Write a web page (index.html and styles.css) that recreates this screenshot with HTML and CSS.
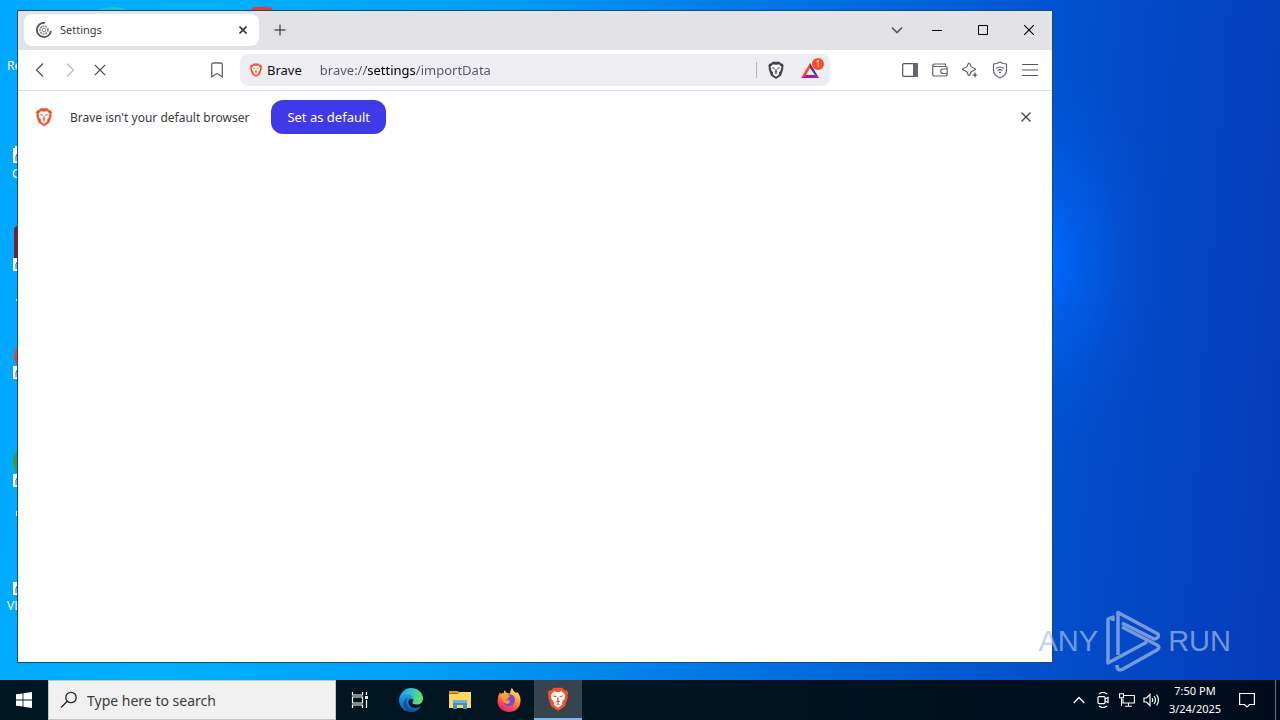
FILE: index.html
```html
<!DOCTYPE html>
<html lang="en">

<head>
  <meta charset="UTF-8">
  <meta name="viewport" content="width=device-width, initial-scale=1.0">
  <title>Settings</title>
  <link rel="stylesheet" href="styles.css">
</head>

<body>
  <!-- shared shapes -->
  <svg class="defs" aria-hidden="true">
    <symbol id="lion" viewBox="0 0 24 28">
      <path class="shield" d="M7 1h10l3 3 2-.3L24 7l-1 3 .5 2-3.500 10.500L12 28 4 22.500.500 12 1 10 0 7l2-3.300L4 4z" />
      <path class="face" d="M7.500 5l3 .7h3l3-.7 4 4.500-1 2.500 .5 1.500-3.500 4.500 .5 2.500L12 24.500 7 20.500l.5-2.500L4 13.500l.5-1.500-1-2.500z" />
      <path class="shield" d="M6 9.500l4.500 1.200-.7 1.300-2.800-.5zM18 9.500l-4.500 1.200 .7 1.300 2.800-.5zM11.300 12h1.400l.2 4 1.600 1-2.500 1.600L9.500 17l1.600-1zM9 20.300l3-1.300 3 1.300-3 .5z" />
    </symbol>
  </svg>

  <main class="desktop">
    <svg class="behind" width="300" height="680" viewBox="0 0 300 680" aria-hidden="true">
      <ellipse cx="113" cy="16" rx="19" ry="9" fill="#17c6d4" />
      <rect x="252" y="7" width="20" height="12" rx="3" fill="#e93a2b" />
      <path d="M13 148h2v-2h2v2h3v15h-7z" fill="#fff" />
      <rect x="14" y="226" width="12" height="38" rx="4" fill="#8d1620" />
      <circle cx="30" cy="356" r="16" fill="#e5404b" />
      <circle cx="30" cy="462" r="17" fill="#3a9b3c" />
      <g fill="#fff">
        <path d="M13 258h8v13h-8zM13 366h8v13h-8zM13 474h8v13h-8zM13 582h8v13h-8z" />
        <path d="M16 299h2v2h-2zM16 511h2v5h-2z" />
      </g>
      <path d="M18 153l-2 3v5M18 261l-2 3v5M18 369l-2 3v5M18 477l-2 3v5M18 585l-2 3v5" fill="none" stroke="#1b5c94" stroke-width="1" />
    </svg>
    <span class="label label-bin">Re</span>
    <span class="label label-office">C</span>
    <span class="label label-player">VL</span>

    <section class="window">
      <header class="tabs">
        <div class="tab">
          <svg width="16" height="16" viewBox="0 0 16 16" fill="none" stroke="#55565e">
            <path d="M9 .9A7.100 7.100 0 1 0 15 9" stroke-width="1.800" />
            <circle cx="8" cy="8" r="4" stroke-width="1.600" stroke-dasharray="2 .8" stroke="#85868f" />
            <circle cx="8" cy="8" r="1.800" stroke="#85868f" />
          </svg>
          <span class="tab-title">Settings</span>
          <button class="tab-close" aria-label="Close tab">
            <svg width="8" height="8" viewBox="0 0 8 8"><path d="M.5.5l7 7M7.500.5l-7 7" stroke="#333" stroke-width="1.600" /></svg>
          </button>
        </div>
        <button class="tool" aria-label="New tab">
          <svg width="12" height="12" viewBox="0 0 12 12"><path d="M6 .5v11M.5 6h11" stroke="#555" stroke-width="1.400" /></svg>
        </button>
        <div class="controls">
          <button class="tool" aria-label="Search tabs">
            <svg width="12" height="8" viewBox="0 0 12 8"><path d="M1 1.500l5 5 5-5" fill="none" stroke="#55555c" stroke-width="1.600" /></svg>
          </button>
          <button class="control" aria-label="Minimize">
            <svg width="10" height="10" viewBox="0 0 10 10"><path d="M0 5.500h10" stroke="#000" /></svg>
          </button>
          <button class="control" aria-label="Maximize">
            <svg width="10" height="10" viewBox="0 0 10 10"><path d="M.5.5h9v9h-9z" fill="none" stroke="#000" /></svg>
          </button>
          <button class="control" aria-label="Close">
            <svg width="10" height="10" viewBox="0 0 10 10"><path d="M0 0l10 10M10 0L0 10" stroke="#000" stroke-width="1.100" /></svg>
          </button>
        </div>
      </header>

      <nav class="toolbar">
        <button class="tool" aria-label="Back">
          <svg width="10" height="14" viewBox="0 0 10 14"><path d="M8 .5L1.500 7 8 13.500" fill="none" stroke="#55565e" stroke-width="1.300" /></svg>
        </button>
        <button class="tool" aria-label="Forward">
          <svg width="10" height="14" viewBox="0 0 10 14"><path d="M2 .5L8.500 7 2 13.500" fill="none" stroke="#bbb" stroke-width="1.300" /></svg>
        </button>
        <button class="tool" aria-label="Stop">
          <svg width="12" height="12" viewBox="0 0 12 12"><path d="M.8.8l10.400 10.400M11.200.8L.8 11.200" stroke="#444" stroke-width="1.200" /></svg>
        </button>
        <button class="tool bookmark" aria-label="Bookmark">
          <svg width="12" height="16" viewBox="0 0 12 16"><path d="M2.500 1h7q1.800 0 1.800 1.800v12L6 11.500l-5.300 3.300v-12Q.7 1 2.500 1z" fill="none" stroke="#66676e" stroke-width="1.300" /></svg>
        </button>
        <div class="omnibox">
          <svg class="lion orange" width="12" height="14"><use href="#lion" /></svg>
          <label for="url">Brave</label>
          <input type="text" id="url" class="url" value="brave://settings/importData">
          <button class="tool shields" aria-label="Shields">
            <svg class="lion dark" width="16" height="18"><use href="#lion" /></svg>
          </button>
          <button class="tool rewards" aria-label="Rewards">
            <svg width="18" height="16" viewBox="0 0 18 16">
              <path d="M9 1L0 16l5-3 4-7z" fill="#ff4724" />
              <path d="M0 16h18l-4-3H5z" fill="#9e1f9a" />
              <path d="M9 1l9 15-4-3-5-7z" fill="#5b2d91" />
            </svg>
            <span class="badge">1</span>
          </button>
        </div>
        <button class="tool" aria-label="Sidebar">
          <svg width="16" height="14" viewBox="0 0 16 14"><rect x=".7" y=".7" width="14.600" height="12.600" rx="1" fill="none" stroke="#55565e" stroke-width="1.200" /><path d="M11 0h5v14h-5z" fill="#66676e" /></svg>
        </button>
        <button class="tool" aria-label="Wallet">
          <svg width="16" height="14" viewBox="0 0 16 14" fill="none" stroke="#66676e" stroke-width="1.200"><path d="M13.500 3.500V1H2.500Q.7 1 .7 2.500V11q0 2 2 2h10q2.500 0 2.500-2V5.500q0-2-2-2H2Q.7 3.500.7 2.300M15.300 6H11a2 2 0 0 0 0 4.500h4.300" /></svg>
        </button>
        <button class="tool" aria-label="Leo">
          <svg width="16" height="16" viewBox="0 0 16 16" fill="none" stroke="#55565e" stroke-width="1.200"><path d="M7 1q1 0 1.300 2Q8.800 5.500 11.500 6q2 .4 2 1.200t-2 1.300q-2.700.7-3.200 3-.3 2-1.300 2t-1.300-2q-.5-2.300-3.200-3-2-.5-2-1.300t2-1.200Q5.200 5.500 5.700 3 6 1 7 1z" /><path d="M13 9.500l.8 2.700 2.200.8-2.200.8L13 16l-.8-2.200L10 13l2.200-.8z" fill="#55565e" stroke="none" /></svg>
        </button>
        <button class="tool" aria-label="VPN">
          <svg width="16" height="18" viewBox="0 0 16 18" fill="none" stroke="#66676e" stroke-width="1.200"><path d="M8 1q3 2 6.500 2v6q0 5-6.500 8-6.500-3-6.500-8V3Q5 3 8 1zM4 7.500q4-3 8 0M5.500 9.700q2.500-2 5 0" /><circle cx="8" cy="11.500" r="1" fill="#66676e" stroke="none" /></svg>
        </button>
        <button class="tool" aria-label="Menu">
          <svg width="16" height="12" viewBox="0 0 16 12"><path d="M0 .5h16M0 6h16M0 11.500h16" stroke="#55565e" stroke-width="1.200" /></svg>
        </button>
      </nav>

      <div class="infobar">
        <svg class="lion orange" width="16" height="20"><use href="#lion" /></svg>
        <span class="message">Brave isn't your default browser</span>
        <button class="primary">Set as default</button>
        <button class="tool dismiss" aria-label="Dismiss">
          <svg width="10" height="10" viewBox="0 0 10 10"><path d="M.5.5l9 9M9.500.5l-9 9" stroke="#444" stroke-width="1.300" /></svg>
        </button>
      </div>
    </section>

    <div class="watermark">
      <span>ANY</span>
      <svg width="58" height="64" viewBox="0 0 58 64" fill="none" stroke="currentColor" stroke-width="3.500" stroke-linejoin="round">
        <path d="M9 12V8L4 10v44l39-21" />
        <path d="M14 46V3.500L54 25q2 4-4 5L18 14" />
        <path d="M13 56q0 7 6 4l34-19q4-3 0-5L18 18" />
      </svg>
      <span>RUN</span>
    </div>
  </main>

  <footer class="taskbar">
    <button class="task" aria-label="Start">
      <svg width="16" height="16" viewBox="0 0 16 16" fill="#fff"><path d="M0 2.300L6.600 1.400v6.200H0zM7.400 1.300L16 0v7.600H7.400zM0 8.400h6.600v6.200L0 13.700zM7.400 8.400H16V16l-8.600-1.300z" /></svg>
    </button>
    <div class="search">
      <svg width="18" height="18" viewBox="0 0 18 18" fill="none" stroke="#222" stroke-width="1.300"><circle cx="11" cy="6.500" r="5.200" /><path d="M7.300 10.200L1 16.500" /></svg>
      <input type="text" aria-label="Search" placeholder="Type here to search">
    </div>
    <div class="apps">
      <button class="task view" aria-label="Task View">
        <svg width="18" height="16" viewBox="0 0 18 16" fill="none" stroke="#fff" stroke-width="1.200"><path d="M1.500 0v3h10V0M1.500 5h10v6h-10zM1.500 16v-3h10v3M15.500 0v3M15.500 8v8" /><path d="M14 4h3v3h-3z" fill="#fff" stroke="none" /></svg>
      </button>
      <button class="task" aria-label="Edge">
        <svg width="24" height="24" viewBox="0 0 24 24">
          <defs>
            <linearGradient id="edgeTop" x1="0" y1="0" x2="1" y2="0.300"><stop offset="0" stop-color="#2598e0" /><stop offset=".5" stop-color="#31c3d0" /><stop offset="1" stop-color="#62dd68" /></linearGradient>
            <linearGradient id="edgeSide" x1="0" y1="0" x2="0" y2="1"><stop offset="0" stop-color="#1fa1e8" /><stop offset="1" stop-color="#1256ac" /></linearGradient>
          </defs>
          <path d="M0 12C1 4.500 6 0 12 0c7 0 12 5 12 10.500 0 4-3 6-6.500 6-3 0-4.500-1-4-2.300 2-2.500.5-5.700-3.500-5.700C5 8.500 1 9 0 12z" fill="url(#edgeTop)" />
          <path d="M0 12C1 7.500 5 5.500 9 6c4 .5 5.500 3.500 5 6-1-1.500-3-1.500-4 0-2 3 1 8 6 8 3 0 5-1 6.500-2C20 22 16.500 24 12 24 5 24 0 18.500 0 12z" fill="url(#edgeSide)" />
          <path d="M9 9.500c-3 3-1.500 11.500 6 14C9 25 4 20 4.500 15 5 12 7 10 9 9.500z" fill="#0d478e" opacity=".7" />
        </svg>
      </button>
      <button class="task" aria-label="File Explorer">
        <svg width="22" height="20" viewBox="0 0 22 20"><path d="M0 1h9l2 2H0z" fill="#e59b19" /><path d="M0 3.500h9l2-1.500h11V18H0z" fill="#ffd765" /><path d="M4 10.500h14V19h-4v-4H8v4H4z" fill="#3e91cc" /><path d="M4 10.500h14V13H4z" fill="#62b5e5" /></svg>
      </button>
      <button class="task" aria-label="Firefox">
        <svg width="24" height="24" viewBox="0 0 24 24">
          <defs><linearGradient id="fox" x1=".8" y1="0" x2=".3" y2="1"><stop offset="0" stop-color="#fff36b" /><stop offset=".4" stop-color="#ff9d2c" /><stop offset=".75" stop-color="#ff4755" /><stop offset="1" stop-color="#e22078" /></linearGradient></defs>
          <path d="M3 4l1 2 3-1V2l3 3 3 .5Q13 2 15 0q1 3 4 5l1-1q4 4 3.500 9.500C23 20 18 24 12 24S.5 19.500.5 13Q.5 8 3 4z" fill="url(#fox)" />
          <path d="M10 7q7-2 8 4 0 7-6 7-5 0-6-5 2 2 5 1l2-2-4-1z" fill="#7548d9" />
          <path d="M4 6q3-2 6 .5l3 1.500-3 3H8l1 2q2 1 4-.5 0 4-4 3Q4 14 4 6z" fill="#ffa52f" />
        </svg>
      </button>
      <button class="task active" aria-label="Brave">
        <svg class="lion orange" width="22" height="24"><use href="#lion" /></svg>
      </button>
    </div>
    <div class="tray">
      <button aria-label="Show hidden icons"><svg width="12" height="8" viewBox="0 0 12 8"><path d="M.7 7L6 1.500 11.300 7" fill="none" stroke="#fff" stroke-width="1.300" /></svg></button>
      <button aria-label="Meet Now"><svg width="12" height="16" viewBox="0 0 12 16" fill="none" stroke="#fff" stroke-width="1.200"><path d="M2 2q4-3 8 0M2 14q4 3 8 0" /><rect x="1" y="4.600" width="7" height="7" rx="1" /><path d="M8 7l3-1.500v5L8 9" /></svg></button>
      <button aria-label="Network"><svg width="16" height="14" viewBox="0 0 16 14" fill="none" stroke="#fff" stroke-width="1.100"><path d="M5 2.500h10.400v7.500H4V6M9.500 10v3M6 13.300h7M.5.8h4v4h-4zM2.500 5v8" /></svg></button>
      <button aria-label="Volume"><svg width="17" height="14" viewBox="0 0 17 14" fill="none" stroke="#fff" stroke-width="1.200"><path d="M1 5h2.500L7 1.500v11L3.500 9H1zM9 5q1.500 2 0 4M11 3q3 4 0 8M13.500 1.500q4 5.500 0 11" /></svg></button>
      <div class="clock"><span>7:50 PM</span><span>3/24/2025</span></div>
      <button class="notice" aria-label="Notifications"><svg width="16" height="16" viewBox="0 0 16 16"><path d="M.6 1.500h14.800v11h-4.800L8 15l-2.600-2.500H.6z" fill="none" stroke="#fff" stroke-width="1.200" /></svg></button>
      <button class="show" aria-label="Show desktop"></button>
    </div>
  </footer>
</body>

</html>
```
FILE: styles.css
```css
* {
  box-sizing: border-box;
}

body {
  margin: 0;
  height: 100vh;
  display: flex;
  flex-direction: column;
  overflow: hidden;
  font-family: "Noto Sans", "Open Sans", sans-serif;
  font-size: 12px;
  color: #3b3b42;
}

button {
  display: flex;
  align-items: center;
  justify-content: center;
  flex: none;
  padding: 0;
  border: 0;
  background: none;
  font: inherit;
}

input {
  min-width: 0;
  padding: 0;
  border: 0;
  outline: 0;
  background: none;
  font: inherit;
}

svg {
  flex: none;
}

.defs {
  position: absolute;
  width: 0;
  height: 0;
}

.orange {
  fill: #f4512c;
}

.dark {
  fill: #42434d;
}

.face {
  fill: #fff;
}

/* desktop */
.desktop {
  position: relative;
  flex: 1;
  background:
    radial-gradient(ellipse 130px 200px at 81% 38%, #0068ff 10%, rgba(0, 104, 255, 0.5) 35%, rgba(0, 104, 255, 0.15) 65%, transparent),
    linear-gradient(94deg, #00a8ff 0%, #00b0ff 15%, #00a0f8 35%, #0076e4 58%, #0052ce 80%, #0446c4 90%, #043bb7 100%);
}

.behind {
  position: absolute;
  left: 0;
  top: 0;
}

.label {
  position: absolute;
  left: 7px;
  color: #fff;
  line-height: 16px;
}

.label-bin {
  top: 58px;
}

.label-office {
  top: 166px;
  left: 12px;
}

.label-player {
  top: 598px;
}

/* browser window */
.window {
  position: absolute;
  inset: 10px 227px 17px 17px;
  display: flex;
  flex-direction: column;
  border: 1px solid #1c4a66;
  background: #fff;
}

.tabs {
  display: flex;
  align-items: center;
  height: 39px;
  padding: 0 0 2px 6px;
  background: #e2e2e7;
}

.tab {
  display: flex;
  align-items: center;
  width: 235px;
  height: 32px;
  margin-right: 6px;
  padding: 0 8px 0 12px;
  border-radius: 8px;
  background: #fff;
}

.tab-title {
  flex: 1;
  margin-left: 8px;
  font-size: 11px;
}

.tab-close {
  width: 16px;
  height: 16px;
}

.tool {
  position: relative;
  width: 30px;
  height: 30px;
}

.controls {
  display: flex;
  align-items: center;
  margin-left: auto;
}

.controls .tool {
  margin-right: 2px;
}

.control {
  width: 46px;
  height: 36px;
}

.toolbar {
  display: flex;
  align-items: center;
  height: 41px;
  padding: 0 7px;
  border-bottom: 1px solid #dddde2;
}

.bookmark {
  margin: 0 8px 0 87px;
}

.omnibox {
  display: flex;
  align-items: center;
  flex: 1;
  height: 32px;
  margin-right: 65px;
  padding: 0 5px 0 10px;
  border-radius: 8px;
  background: #ededf2;
  font-size: 13px;
}

.omnibox label {
  margin: 0 18px 0 5px;
  color: #111;
}

/* the host part of the address is darker than the rest */
.url {
  flex: 1;
  background: linear-gradient(90deg, #55565e 46px, #000 46px, #000 95px, #55565e 95px);
  background-clip: text;
  color: transparent;
}

.shields {
  margin-right: 4px;
}

.shields::before {
  content: "";
  position: absolute;
  left: -5px;
  top: 7px;
  height: 16px;
  border-left: 1px solid #b4b4bb;
}

.badge {
  position: absolute;
  right: 1px;
  top: 3px;
  width: 12px;
  height: 12px;
  border-radius: 50%;
  background: #fb4b23;
  color: #fff;
  font-size: 8px;
  line-height: 12px;
}

.infobar {
  display: flex;
  align-items: center;
  padding: 9px 11px 9px 18px;
}

.message {
  margin: 0 22px 0 18px;
}

.primary {
  height: 34px;
  padding: 0 16px;
  border-radius: 12px;
  background: #3f39e8;
  color: #fff;
  font-size: 13px;
}

.dismiss {
  margin-left: auto;
}

/* watermark */
.watermark {
  position: absolute;
  right: 49px;
  bottom: 7px;
  display: flex;
  align-items: center;
  gap: 6px;
  color: rgba(165, 190, 228, 0.7);
  font-family: "Liberation Sans", sans-serif;
  font-size: 29px;
}

/* taskbar */
.taskbar {
  display: flex;
  height: 40px;
  background: linear-gradient(90deg, #001620, #001520 50%, #000c1c);
}

.task {
  width: 48px;
  height: 40px;
}

.search {
  display: flex;
  align-items: center;
  flex: 0 1 288px;
  gap: 9px;
  padding: 0 11px;
  border: 1px solid #c5c5c5;
  background: #f1f1f1;
  font-size: 14px;
}

.search input {
  flex: 1;
}

.search input::placeholder {
  color: #3a3a3a;
}

.apps {
  display: flex;
  gap: 1px;
}

.view {
  margin-right: 2px;
}

.active {
  border-bottom: 2px solid #76b9ed;
  background: #35444e;
}

.tray {
  display: flex;
  align-items: center;
  margin-left: auto;
  color: #fff;
}

.tray button {
  width: 24px;
  height: 40px;
}

.clock {
  display: flex;
  flex-direction: column;
  width: 64px;
  font-size: 11px;
  line-height: 18px;
  text-align: center;
}

.tray .notice {
  width: 40px;
}

.tray .show {
  width: 5px;
  margin-left: 8px;
  border-left: 1px solid #6a7480;
}
```
